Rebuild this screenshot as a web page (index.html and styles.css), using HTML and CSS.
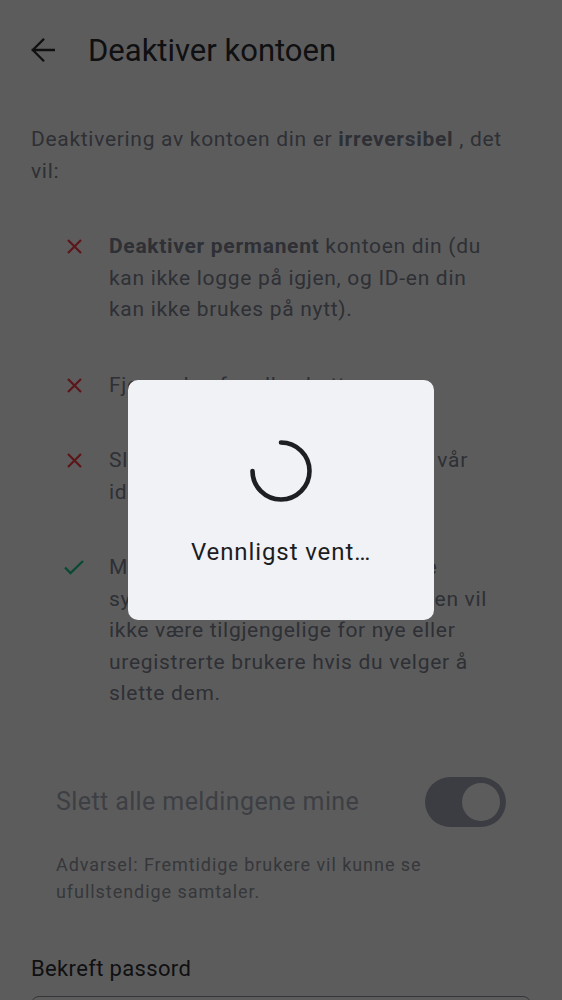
FILE: index.html
```html
<!DOCTYPE html>
<html lang="no">
<head>
<meta charset="utf-8">
<title>Deaktiver kontoen</title>
<link rel="stylesheet" href="styles.css">
</head>
<body>
<div class="page">
  <header class="topbar">
    <svg class="back" width="24" height="24" viewBox="0 0 24 24" aria-hidden="true">
      <path d="M23 12H1.8M12.2 1.6L1.8 12l10.4 10.4" fill="none" stroke="currentColor" stroke-width="2.3" stroke-linecap="square"/>
    </svg>
    <h1 class="title">Deaktiver kontoen</h1>
  </header>

  <p class="intro">Deaktivering av kontoen din er <b>irreversibel</b> , det vil:</p>

  <ul class="list">
    <li class="item">
      <span class="ico"><svg width="15" height="15" viewBox="0 0 15 15"><path d="M1 1l13 13M14 1L1 14" class="x"/></svg></span>
      <span class="txt"><b>Deaktiver permanent</b> kontoen din (du kan ikke logge på igjen, og ID-en din kan ikke brukes på nytt).</span>
    </li>
    <li class="item">
      <span class="ico"><svg width="15" height="15" viewBox="0 0 15 15"><path d="M1 1l13 13M14 1L1 14" class="x"/></svg></span>
      <span class="txt">Fjerne deg fra alle chatterom.</span>
    </li>
    <li class="item">
      <span class="ico"><svg width="15" height="15" viewBox="0 0 15 15"><path d="M1 1l13 13M14 1L1 14" class="x"/></svg></span>
      <span class="txt">Slett kontoinformasjonen din fra vår identitetsserver.</span>
    </li>
    <li class="item">
      <span class="ico"><svg width="20" height="15" viewBox="0 0 20 15"><path d="M1 7.5l5.5 5.5L19 1" class="ok"/></svg></span>
      <span class="txt">Meldingene dine vil fortsatt være synlige for registrerte brukere, men vil ikke være tilgjengelige for nye eller uregistrerte brukere hvis du velger å slette dem.</span>
    </li>
  </ul>

  <div class="toggle-row">
    <span class="toggle-label">Slett alle meldingene mine</span>
    <span class="switch"><span class="thumb"></span></span>
  </div>
  <p class="warning">Advarsel: Fremtidige brukere vil kunne se ufullstendige samtaler.</p>

  <div class="confirm-label">Bekreft passord</div>
  <div class="field"></div>
</div>

<div class="scrim">
  <div class="dialog" role="dialog">
    <svg class="spinner" width="62" height="62" viewBox="0 0 62 62" aria-hidden="true">
      <path d="M31 2.5A28.5 28.5 0 1 1 2.5 31" fill="none" stroke="#1e1f23" stroke-width="4.6" stroke-linecap="round"/>
    </svg>
    <div class="wait">Vennligst vent…</div>
  </div>
</div>
</body>
</html>
```

FILE: styles.css
```css
* { box-sizing: border-box; }
html, body { margin: 0; padding: 0; }
body {
  background: #ffffff;
  font-family: Roboto, "Noto Sans", sans-serif;
  color: #808593;
}
.page { padding: 0 31px; }

.topbar {
  height: 100px;
  display: flex;
  align-items: center;
  gap: 33px;
}
.back { color: #2d2e33; flex: none; }
.title {
  margin: 0;
  font-size: 31px;
  font-weight: 400;
  color: #2d2e33;
}

.intro {
  margin: 24px 0 0;
  font-size: 21px;
  line-height: 31.5px;
  letter-spacing: 0.7px;
}
.intro b, .txt b { font-weight: 700; }

.list {
  list-style: none;
  margin: 44px 0 0;
  padding: 0 31px 0 33px;
  display: flex;
  flex-direction: column;
  gap: 44px;
}
.item {
  display: flex;
  gap: 25px;
  font-size: 21px;
  line-height: 31.5px;
  letter-spacing: 0.7px;
}
.ico {
  flex: none;
  width: 20px;
  height: 31.5px;
  display: flex;
  align-items: center;
  justify-content: center;
}
.x { fill: none; stroke: #ff3b46; stroke-width: 2.2; }
.ok { fill: none; stroke: #1ccd8e; stroke-width: 2.4; }

.toggle-row {
  margin-top: 67px;
  padding: 0 25px;
  height: 50px;
  display: flex;
  align-items: center;
  justify-content: space-between;
}
.toggle-label {
  font-size: 25px;
  letter-spacing: 0.4px;
  color: #a9afbd;
}
.switch {
  position: relative;
  width: 81px;
  height: 50px;
  border-radius: 25px;
  background: #a7aab7;
}
.thumb {
  position: absolute;
  top: 6px;
  right: 6px;
  width: 38px;
  height: 38px;
  border-radius: 50%;
  background: #ffffff;
}

.warning {
  margin: 24px 0 0;
  padding: 0 25px;
  font-size: 18px;
  line-height: 27px;
  letter-spacing: 0.95px;
  color: #959aa5;
}

.confirm-label {
  margin-top: 49px;
  font-size: 22px;
  line-height: 30px;
  letter-spacing: 0.35px;
  color: #2d2e33;
}
.field {
  margin-top: 12px;
  height: 56px;
  border: 1px solid #8d929e;
  border-radius: 8px;
}

.scrim {
  position: fixed;
  inset: 0;
  background: rgba(0, 0, 0, 0.64);
  display: flex;
  align-items: center;
  justify-content: center;
}
.dialog {
  width: 306px;
  height: 240px;
  border-radius: 10px;
  background: #f1f2f6;
  display: flex;
  flex-direction: column;
  align-items: center;
  padding-top: 60px;
}
.spinner { flex: none; }
.wait {
  margin-top: 35px;
  font-size: 24px;
  line-height: 30px;
  letter-spacing: 0.9px;
  color: #1c1d21;
}
```
